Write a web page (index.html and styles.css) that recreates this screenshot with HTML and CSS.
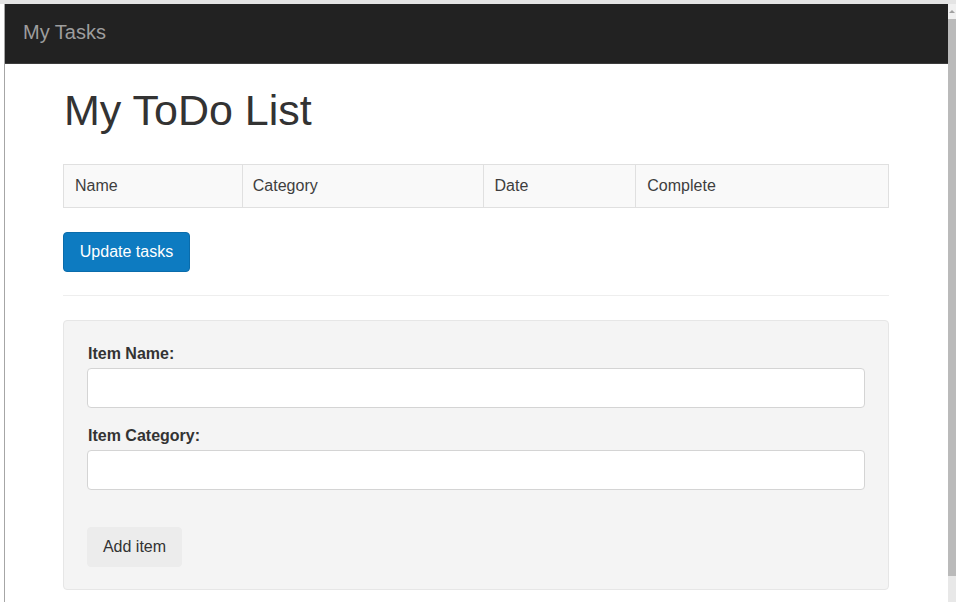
FILE: index.html
```html
<!DOCTYPE html>
<html lang="en">
<head>
<meta charset="utf-8">
<title>My Tasks</title>
<link rel="stylesheet" href="styles.css">
</head>
<body>
<div class="topstrip"></div>
<div class="window">
  <div class="gutter"></div>
  <div class="viewport">
    <nav class="navbar"><span class="brand">My Tasks</span></nav>
    <main class="container">
      <h1 class="title">My ToDo List</h1>
      <table class="tasks">
        <thead>
          <tr>
            <th class="col-name">Name</th>
            <th class="col-cat">Category</th>
            <th class="col-date">Date</th>
            <th class="col-done">Complete</th>
          </tr>
        </thead>
      </table>
      <button class="btn btn-primary" type="button">Update tasks</button>
      <hr class="divider">
      <form class="well">
        <label class="field-label" for="name">Item Name:</label>
        <input class="field-input" id="name" type="text">
        <label class="field-label second" for="cat">Item Category:</label>
        <input class="field-input" id="cat" type="text">
        <button class="btn btn-default" type="button">Add item</button>
      </form>
    </main>
  </div>
  <div class="scrollbar">
    <div class="sb-arrow"><span class="sb-tri"></span></div>
    <div class="sb-thumb"></div>
    <div class="sb-track"></div>
  </div>
</div>
</body>
</html>
```

FILE: styles.css
```css
* { box-sizing: border-box; }
html, body {
  margin: 0;
  padding: 0;
  height: 602px;
  overflow: hidden;
  background: #fff;
  font-family: "Liberation Sans", Arial, sans-serif;
  color: #333;
}
.topstrip {
  height: 4px;
  background: #e4e4e4;
}
.window {
  display: flex;
  height: 598px;
}
.gutter {
  width: 4px;
  background: #fff;
}
.viewport {
  flex: 1;
  border-left: 1px solid #a6a6a6;
  display: flex;
  flex-direction: column;
}
.navbar {
  height: 60px;
  background: #222;
  border-bottom: 1px solid #3c3c3c;
  display: flex;
  align-items: center;
  padding: 0 0 2px 18px;
}
.brand {
  font-size: 20px;
  color: #9d9d9d;
}
.container {
  width: 826px;
  margin: 0 0 0 58px;
}
.title {
  margin: 22px 0 30px 1px;
  font-size: 43px;
  line-height: 48px;
  font-weight: normal;
  color: #333;
}
.tasks {
  width: 826px;
  border-collapse: collapse;
  background: #f9f9f9;
}
.tasks th {
  border: 1px solid #e0e0e0;
  text-align: left;
  font-weight: normal;
  font-size: 16px;
  line-height: 20px;
  padding: 11px 11px;
  color: #3e3e3e;
}
.tasks .col-name { width: 179px; }
.tasks .col-cat { width: 242px; padding-left: 10px; }
.tasks .col-date { width: 152px; padding-left: 10px; }
.tasks .col-done { width: 253px; }
.btn {
  display: block;
  font-family: "Liberation Sans", Arial, sans-serif;
  font-size: 16px;
  line-height: 20px;
  border-radius: 4px;
  cursor: pointer;
}
.btn-primary {
  margin-top: 24px;
  width: 127px;
  height: 40px;
  padding: 0;
  background: #0d7bc1;
  border: 1px solid #0a6cab;
  color: #fff;
}
.divider {
  margin: 23px 0 0 0;
  border: 0;
  border-top: 1px solid #eee;
  height: 0;
}
.well {
  margin-top: 24px;
  height: 270px;
  background: #f4f4f4;
  border: 1px solid #e6e6e6;
  border-radius: 4px;
  padding: 22px 23px 22px 23px;
  display: flex;
  flex-direction: column;
  align-items: flex-start;
}
.field-label {
  display: block;
  font-size: 16px;
  line-height: 22px;
  font-weight: bold;
  color: #333;
  margin: 0 0 3px 1px;
}
.field-label.second {
  margin-top: 17px;
}
.field-input {
  width: 778px;
  height: 40px;
  border: 1px solid #d4d4d4;
  border-radius: 4px;
  background: #fff;
  font-size: 16px;
  padding: 6px 12px;
}
.btn-default {
  margin-top: 37px;
  width: 95px;
  height: 40px;
  padding: 0;
  background: #ececec;
  border: 1px solid #ececec;
  color: #333;
}
.scrollbar {
  width: 8px;
  display: flex;
  flex-direction: column;
}
.sb-arrow {
  height: 15px;
  background: #f0f0f0;
  display: flex;
  justify-content: center;
  padding-top: 6px;
}
.sb-tri {
  width: 0;
  height: 0;
  border-left: 3px solid transparent;
  border-right: 3px solid transparent;
  border-bottom: 3px solid #a0a0a0;
}
.sb-thumb {
  height: 557px;
  background: #bababa;
}
.sb-track {
  flex: 1;
  background: #e8e8e8;
}
```
